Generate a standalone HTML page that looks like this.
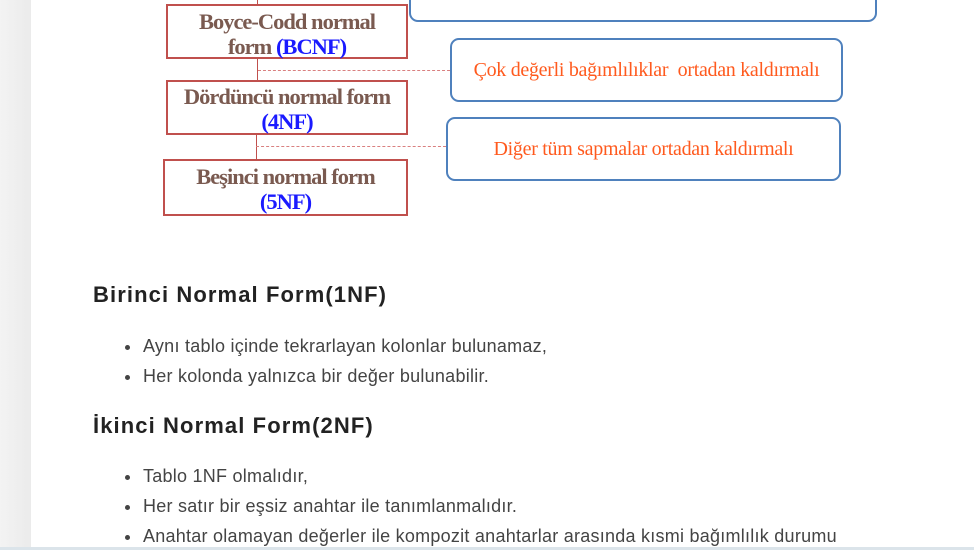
<!DOCTYPE html>
<html><head><meta charset="utf-8"><style>
*{margin:0;padding:0;box-sizing:border-box}
body{width:974px;height:550px;overflow:hidden;background:#fff;position:relative;font-family:"Liberation Sans",sans-serif}
.side{position:absolute;left:0;top:0;width:31px;height:550px;background:linear-gradient(to right,#f3f3f3,#ebebeb)}
.bl{position:absolute;left:0;right:0;top:547px;height:3px;background:#dbe4ea}
.r{position:absolute;border:2px solid #c0504d;background:#fff;text-align:center;font-family:"Liberation Serif",serif;font-weight:bold;font-size:22.5px;line-height:25px;color:#7a5a50;letter-spacing:-1px;white-space:nowrap}
.r b{color:#1a1aff}
.bx{position:absolute;border:2px solid #4f81bd;border-radius:9px;background:#fff;font-family:"Liberation Serif",serif;font-size:20px;color:#ff5a1e;display:flex;align-items:center;justify-content:center;letter-spacing:-0.3px;white-space:nowrap}
.v{position:absolute;width:1px;background:#c0504d}
.d{position:absolute;height:0;border-top:1px dashed #d98080}
h2{position:absolute;left:93px;font-size:22px;font-weight:bold;color:#222;letter-spacing:1.1px}
.li{position:absolute;left:143px;font-size:18px;color:#444;letter-spacing:0.25px;white-space:nowrap}
.li:before{content:"";position:absolute;left:-18px;top:9px;width:5px;height:5px;border-radius:50%;background:#444}
</style></head><body>
<div class="side"></div>
<div class="v" style="left:257px;top:0;height:5px"></div>
<div class="v" style="left:257px;top:58px;height:23px"></div>
<div class="v" style="left:256px;top:134px;height:26px"></div>
<div class="d" style="left:258px;top:70px;width:192px"></div>
<div class="d" style="left:256px;top:146px;width:190px"></div>
<div class="r" style="left:166px;top:4px;width:242px;height:55px;padding-top:3px">Boyce-Codd normal<br>form <b>(BCNF)</b></div>
<div class="r" style="left:166px;top:80px;width:242px;height:55px;padding-top:2px">Dördüncü normal form<br><b>(4NF)</b></div>
<div class="r" style="left:163px;top:159px;width:245px;height:57px;padding-top:3px">Beşinci normal form<br><b>(5NF)</b></div>
<div class="bx" style="left:409px;top:-12px;width:468px;height:34px"></div>
<div class="bx" style="left:450px;top:38px;width:393px;height:64px">Çok değerli bağımlılıklar &nbsp;ortadan kaldırmalı</div>
<div class="bx" style="left:446px;top:117px;width:395px;height:64px">Diğer tüm sapmalar ortadan kaldırmalı</div>
<h2 style="top:282px">Birinci Normal Form(1NF)</h2>
<div class="li" style="top:336px">Aynı tablo içinde tekrarlayan kolonlar bulunamaz,</div>
<div class="li" style="top:366px">Her kolonda yalnızca bir değer bulunabilir.</div>
<h2 style="top:413px">İkinci Normal Form(2NF)</h2>
<div class="li" style="top:466px">Tablo 1NF olmalıdır,</div>
<div class="li" style="top:496px">Her satır bir eşsiz anahtar ile tanımlanmalıdır.</div>
<div class="li" style="top:526px">Anahtar olamayan değerler ile kompozit anahtarlar arasında kısmi bağımlılık durumu</div>
<div class="bl"></div>
</body></html>
